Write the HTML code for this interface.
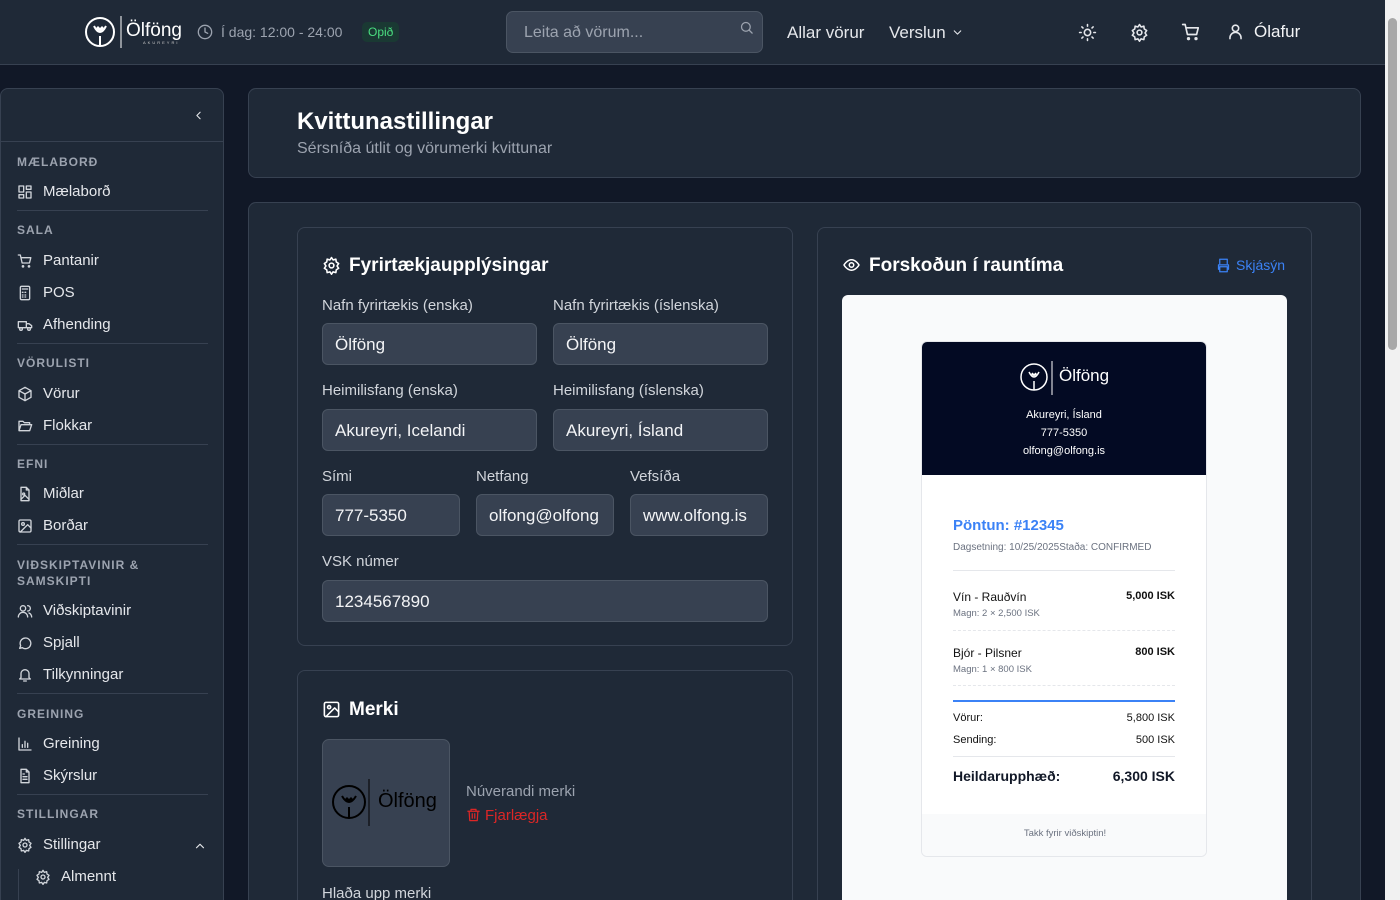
<!DOCTYPE html>
<html style="width:1400px;height:900px;overflow:hidden"><head><meta charset="utf-8"><style>
*{box-sizing:border-box;margin:0;padding:0}
html,body{overflow:hidden}
body{width:1400px;height:900px;overflow:hidden;background:#111827;font-family:"Liberation Sans",sans-serif;color:#f3f4f6;position:relative}
.abs{position:absolute}
svg{display:block}
.ic{fill:none;stroke:currentColor;stroke-width:2;stroke-linecap:round;stroke-linejoin:round}
.hdr{left:0;top:0;width:1385px;height:65px;background:#1f2937;border-bottom:1px solid #374151}
.side{left:0;top:88px;width:224px;height:830px;background:#1f2937;border:1px solid #374151;border-radius:8px}
.sec{position:absolute;left:16px;font-size:12px;font-weight:bold;letter-spacing:1px;color:#9ca3af}
.it{position:absolute;left:16px;font-size:15px;color:#e5e7eb;display:flex;align-items:center;gap:10px}
.it svg{width:16px;height:16px;color:#d1d5db}
.hr{position:absolute;left:16px;width:191px;height:1px;background:#374151}
.card{background:#1f2937;border:1px solid #374151;border-radius:8px}
.lbl{position:absolute;font-size:15px;color:#d1d5db}
.inp{position:absolute;height:42px;background:#374151;border:1px solid #4b5563;border-radius:6px;font-size:17px;color:#f3f4f6;padding:11px 12px;white-space:nowrap;overflow:hidden}
.rc{font-size:11px;color:#111}
</style></head><body>
<div class="abs hdr"></div>
<svg class="abs" style="left:84px;top:14px" width="100" height="36" viewBox="0 0 100 36"><circle cx="16" cy="18" r="14" fill="none" stroke="#fff" stroke-width="2"/><path d="M10 12q6 12 12 0M16 22v10" fill="none" stroke="#fff" stroke-width="2"/><path d="M12 14q4 6 8 0l-2-2-2 2-2-2z" fill="#fff"/><line x1="37" y1="2" x2="37" y2="34" stroke="#fff" stroke-width="1"/></svg>
<div class="abs" style="left:126px;top:20px;font-size:19px;color:#fff">Ölföng</div>
<div class="abs" style="left:143px;top:40px;font-size:4px;letter-spacing:2px;color:#ccc">AKUREYRI</div>
<svg class="abs ic" style="left:197px;top:24px;color:#9ca3af" width="16" height="16" viewBox="0 0 24 24"><circle cx="12" cy="12" r="10"/><path d="M12 6v6l4 2"/></svg>
<div class="abs" style="left:221px;top:24px;font-size:14px;color:#9ca3af">Í dag: 12:00 - 24:00</div>
<div class="abs" style="left:362px;top:22px;padding:3px 6px;font-size:12px;color:#4ade80;background:#14532d66;border-radius:5px">Opið</div>
<div class="abs" style="left:506px;top:11px;width:257px;height:42px;background:#374151;border:1px solid #4b5563;border-radius:7px;font-size:16px;color:#9ca3af;padding:12px 17px">Leita að vörum...</div>
<svg class="abs ic" style="left:739px;top:20px;color:#9ca3af" width="15" height="15" viewBox="0 0 24 24"><circle cx="11" cy="11" r="7"/><path d="M21 21l-5-5"/></svg>
<div class="abs" style="left:787px;top:23px;font-size:17px;color:#e5e7eb">Allar vörur</div>
<div class="abs" style="left:889px;top:23px;font-size:17px;color:#e5e7eb">Verslun</div>
<svg class="abs ic" style="left:951px;top:26px;color:#e5e7eb" width="13" height="13" viewBox="0 0 24 24"><path d="M6 9l6 6 6-6"/></svg>
<svg class="abs ic" style="left:1078px;top:23px;color:#e5e7eb" width="19" height="19" viewBox="0 0 24 24"><circle cx="12" cy="12" r="4"/><path d="M12 2v2M12 20v2M4.9 4.9l1.4 1.4M17.7 17.7l1.4 1.4M2 12h2M20 12h2M4.9 19.1l1.4-1.4M17.7 6.3l1.4-1.4"/></svg>
<svg class="abs ic" style="left:1130px;top:23px;color:#e5e7eb" width="19" height="19" viewBox="0 0 24 24"><circle cx="12" cy="12" r="3"/><path d="M12 2l2 3 3.5-1 .5 3.5 3 2-2 3 2 3-3 2-.5 3.5-3.5-1-2 3-2-3-3.5 1-.5-3.5-3-2 2-3-2-3 3-2 .5-3.5 3.5 1z"/></svg>
<svg class="abs ic" style="left:1181px;top:22px;color:#e5e7eb" width="20" height="20" viewBox="0 0 24 24"><path d="M2 3h3l2.7 12h11l2-8H6"/><circle cx="9" cy="20" r="1"/><circle cx="18" cy="20" r="1"/></svg>
<svg class="abs ic" style="left:1226px;top:22px;color:#e5e7eb" width="19" height="19" viewBox="0 0 24 24"><circle cx="12" cy="8" r="4"/><path d="M5 21v-1a7 7 0 0 1 14 0v1"/></svg>
<div class="abs" style="left:1254px;top:22px;font-size:17px;color:#f3f4f6">Ólafur</div>
<div class="abs" style="left:1385px;top:0;width:15px;height:900px;background:#f1f1f1"></div>
<div class="abs" style="left:1388px;top:18px;width:9px;height:332px;background:#a8a8a8;border-radius:5px"></div>

<div class="abs side">
<svg class="abs ic" style="left:191px;top:20px;color:#e5e7eb" width="13" height="13" viewBox="0 0 24 24"><path d="M15 6l-6 6 6 6"/></svg>
<div class="abs" style="left:0;top:52px;width:222px;height:1px;background:#374151"></div>
<div class="sec" style="top:66px">MÆLABORÐ</div>
<div class="it" style="top:94px"><svg class="ic" viewBox="0 0 24 24"><rect x="3" y="3" width="7" height="9"/><rect x="14" y="3" width="7" height="5"/><rect x="14" y="12" width="7" height="9"/><rect x="3" y="16" width="7" height="5"/></svg>Mælaborð</div>
<div class="hr" style="top:121px"></div>
<div class="sec" style="top:134px">SALA</div>
<div class="it" style="top:163px"><svg class="ic" viewBox="0 0 24 24"><path d="M2 3h3l2.7 12h11l2-8H6"/><circle cx="9" cy="20" r="1"/><circle cx="18" cy="20" r="1"/></svg>Pantanir</div>
<div class="it" style="top:195px"><svg class="ic" viewBox="0 0 24 24"><rect x="5" y="2" width="14" height="20" rx="2"/><path d="M8 6h8M8 11h1M12 11h1M8 15h1M12 15h1M8 18h1M12 18h1"/></svg>POS</div>
<div class="it" style="top:227px"><svg class="ic" viewBox="0 0 24 24"><path d="M2 7h12v9H2zM14 10h4l4 3v3h-8"/><circle cx="6" cy="18" r="2"/><circle cx="18" cy="18" r="2"/></svg>Afhending</div>
<div class="hr" style="top:254px"></div>
<div class="sec" style="top:267px">VÖRULISTI</div>
<div class="it" style="top:296px"><svg class="ic" viewBox="0 0 24 24"><path d="M12 2l9 5v10l-9 5-9-5V7zM3 7l9 5 9-5M12 12v10"/></svg>Vörur</div>
<div class="it" style="top:328px"><svg class="ic" viewBox="0 0 24 24"><path d="M3 19V5h6l2 2h8v3M3 19l3-9h16l-3 9z"/></svg>Flokkar</div>
<div class="hr" style="top:355px"></div>
<div class="sec" style="top:368px">EFNI</div>
<div class="it" style="top:396px"><svg class="ic" viewBox="0 0 24 24"><path d="M14 2H6v20h12V6zM14 2v4h4"/><circle cx="10" cy="12" r="1.5"/><path d="M6 20l6-6 6 6"/></svg>Miðlar</div>
<div class="it" style="top:428px"><svg class="ic" viewBox="0 0 24 24"><rect x="3" y="3" width="18" height="18" rx="2"/><circle cx="9" cy="9" r="2"/><path d="M21 15l-5-5L5 21"/></svg>Borðar</div>
<div class="hr" style="top:455px"></div>
<div class="sec" style="top:468px;line-height:16px">VIÐSKIPTAVINIR &amp;<br>SAMSKIPTI</div>
<div class="it" style="top:513px"><svg class="ic" viewBox="0 0 24 24"><circle cx="9" cy="8" r="4"/><path d="M2 21a7 7 0 0 1 14 0M16 4a4 4 0 0 1 0 8M22 21a7 7 0 0 0-4-6"/></svg>Viðskiptavinir</div>
<div class="it" style="top:545px"><svg class="ic" viewBox="0 0 24 24"><path d="M4 20l1.5-4A8 8 0 1 1 8 19z"/></svg>Spjall</div>
<div class="it" style="top:577px"><svg class="ic" viewBox="0 0 24 24"><path d="M6 16V10a6 6 0 0 1 12 0v6l2 2H4zM10 21h4"/></svg>Tilkynningar</div>
<div class="hr" style="top:604px"></div>
<div class="sec" style="top:618px">GREINING</div>
<div class="it" style="top:646px"><svg class="ic" viewBox="0 0 24 24"><path d="M3 3v18h18M8 17v-4M12 17V8M16 17v-6"/></svg>Greining</div>
<div class="it" style="top:678px"><svg class="ic" viewBox="0 0 24 24"><path d="M14 2H6v20h12V6zM14 2v4h4M9 13h6M9 17h6M9 9h2"/></svg>Skýrslur</div>
<div class="hr" style="top:705px"></div>
<div class="sec" style="top:718px">STILLINGAR</div>
<div class="it" style="top:747px"><svg class="ic" viewBox="0 0 24 24"><circle cx="12" cy="12" r="3"/><path d="M12 2l2 3 3.5-1 .5 3.5 3 2-2 3 2 3-3 2-.5 3.5-3.5-1-2 3-2-3-3.5 1-.5-3.5-3-2 2-3-2-3 3-2 .5-3.5 3.5 1z"/></svg>Stillingar</div>
<svg class="abs ic" style="left:192px;top:750px;color:#e5e7eb" width="14" height="14" viewBox="0 0 24 24"><path d="M6 15l6-6 6 6"/></svg>
<div class="abs" style="left:17px;top:780px;width:1px;height:50px;background:#374151"></div>
<div class="it" style="top:779px;left:34px"><svg class="ic" viewBox="0 0 24 24"><circle cx="12" cy="12" r="3"/><path d="M12 2l2 3 3.5-1 .5 3.5 3 2-2 3 2 3-3 2-.5 3.5-3.5-1-2 3-2-3-3.5 1-.5-3.5-3-2 2-3-2-3 3-2 .5-3.5 3.5 1z"/></svg>Almennt</div>
</div>

<div class="abs card" style="left:248px;top:88px;width:1113px;height:90px"></div>
<div class="abs" style="left:297px;top:108px;font-size:24px;font-weight:bold;color:#fff">Kvittunastillingar</div>
<div class="abs" style="left:297px;top:140px;font-size:16px;color:#9ca3af">Sérsníða útlit og vörumerki kvittunar</div>

<div class="abs card" style="left:248px;top:202px;width:1113px;height:720px"></div>
<div class="abs card" style="left:297px;top:227px;width:496px;height:419px"></div>
<svg class="abs ic" style="left:322px;top:256px;color:#fff" width="19" height="19" viewBox="0 0 24 24"><circle cx="12" cy="12" r="3"/><path d="M12 2l2 3 3.5-1 .5 3.5 3 2-2 3 2 3-3 2-.5 3.5-3.5-1-2 3-2-3-3.5 1-.5-3.5-3-2 2-3-2-3 3-2 .5-3.5 3.5 1z"/></svg>
<div class="abs" style="left:349px;top:255px;font-size:19px;font-weight:bold;color:#fff">Fyrirtækjaupplýsingar</div>
<div class="lbl" style="left:322px;top:297px">Nafn fyrirtækis (enska)</div>
<div class="lbl" style="left:553px;top:297px">Nafn fyrirtækis (íslenska)</div>
<div class="inp" style="left:322px;top:323px;width:215px">Ölföng</div>
<div class="inp" style="left:553px;top:323px;width:215px">Ölföng</div>
<div class="lbl" style="left:322px;top:382px">Heimilisfang (enska)</div>
<div class="lbl" style="left:553px;top:382px">Heimilisfang (íslenska)</div>
<div class="inp" style="left:322px;top:409px;width:215px">Akureyri, Icelandi</div>
<div class="inp" style="left:553px;top:409px;width:215px">Akureyri, Ísland</div>
<div class="lbl" style="left:322px;top:468px">Sími</div>
<div class="lbl" style="left:476px;top:468px">Netfang</div>
<div class="lbl" style="left:630px;top:468px">Vefsíða</div>
<div class="inp" style="left:322px;top:494px;width:138px">777-5350</div>
<div class="inp" style="left:476px;top:494px;width:138px">olfong@olfong</div>
<div class="inp" style="left:630px;top:494px;width:138px">www.olfong.is</div>
<div class="lbl" style="left:322px;top:553px">VSK númer</div>
<div class="inp" style="left:322px;top:580px;width:446px">1234567890</div>

<div class="abs card" style="left:297px;top:670px;width:496px;height:260px"></div>
<svg class="abs ic" style="left:322px;top:700px;color:#fff" width="19" height="19" viewBox="0 0 24 24"><rect x="3" y="3" width="18" height="18" rx="2"/><circle cx="9" cy="9" r="2"/><path d="M21 15l-5-5L5 21"/></svg>
<div class="abs" style="left:349px;top:699px;font-size:19px;font-weight:bold;color:#fff">Merki</div>
<div class="abs" style="left:322px;top:739px;width:128px;height:128px;background:#374151;border:1px solid #4b5563;border-radius:7px"></div>
<svg class="abs" style="left:330px;top:779px" width="40" height="48" viewBox="0 0 40 48"><circle cx="19" cy="23" r="16" fill="none" stroke="#000" stroke-width="2"/><path d="M12 17q7 12 14 0M19 28v11" fill="none" stroke="#000" stroke-width="2"/><path d="M15 20q4 5 8 0l-2-2-2 2-2-2z" fill="#000"/><line x1="39" y1="0" x2="39" y2="47" stroke="#000"/></svg>
<div class="abs" style="left:378px;top:790px;font-size:20px;color:#000">Ölföng</div>
<div class="abs" style="left:466px;top:783px;font-size:15px;color:#9ca3af">Núverandi merki</div>
<svg class="abs ic" style="left:466px;top:807px;color:#dc2626" width="15" height="16" viewBox="0 0 24 24"><path d="M3 6h18M8 6V3h8v3M5 6l1 15h12l1-15M10 10v7M14 10v7"/></svg>
<div class="abs" style="left:485px;top:807px;font-size:15px;color:#dc2626">Fjarlægja</div>
<div class="abs" style="left:322px;top:885px;font-size:15px;color:#d1d5db">Hlaða upp merki</div>

<div class="abs card" style="left:817px;top:227px;width:495px;height:700px"></div>
<svg class="abs ic" style="left:842px;top:256px;color:#fff" width="19" height="18" viewBox="0 0 24 24"><path d="M2 12s4-7 10-7 10 7 10 7-4 7-10 7S2 12 2 12z"/><circle cx="12" cy="12" r="3"/></svg>
<div class="abs" style="left:869px;top:255px;font-size:19px;font-weight:bold;color:#fff">Forskoðun í rauntíma</div>
<svg class="abs ic" style="left:1216px;top:258px;color:#3b82f6" width="15" height="15" viewBox="0 0 24 24"><path d="M6 9V2h12v7M6 18H4v-7h16v7h-2M6 14h12v8H6z"/></svg>
<div class="abs" style="left:1236px;top:257px;font-size:14px;color:#3b82f6">Skjásýn</div>
<div class="abs" style="left:842px;top:295px;width:445px;height:640px;background:#f9fafb;border-radius:6px"></div>
<div class="abs" style="left:921px;top:341px;width:286px;height:516px;background:#fff;border:1px solid #e5e7eb;border-radius:6px;overflow:hidden">
 <div style="height:133px;background:#030a23;position:relative">
  <svg class="abs" style="left:98px;top:18px" width="40" height="36" viewBox="0 0 40 36"><circle cx="14" cy="17" r="13" fill="none" stroke="#fff" stroke-width="1.5"/><path d="M9 12q5 10 10 0M14 21v9" fill="none" stroke="#fff" stroke-width="1.5"/><path d="M11 14q3 4 6 0l-1.5-1.5-1.5 1.5-1.5-1.5z" fill="#fff"/><line x1="32" y1="1" x2="32" y2="35" stroke="#fff"/></svg>
  <div class="abs" style="left:137px;top:24px;font-size:17px;color:#fff">Ölföng</div>
  <div class="abs" style="left:0;width:284px;top:64px;text-align:center;font-size:11px;color:#fff;line-height:18px">Akureyri, Ísland<br>777-5350<br>olfong@olfong.is</div>
 </div>
 <div class="abs" style="left:31px;top:175px;font-size:15px;font-weight:bold;color:#3b82f6">Pöntun: #12345</div>
 <div class="abs" style="left:31px;top:200px;font-size:10px;color:#6b7280">Dagsetning: 10/25/2025Staða: CONFIRMED</div>
 <div class="abs" style="left:31px;top:228px;width:222px;height:1px;background:#e5e7eb"></div>
 <div class="abs rc" style="left:31px;top:248px;font-size:12px">Vín - Rauðvín</div>
 <div class="abs rc" style="right:31px;top:248px;font-size:11px;font-weight:bold">5,000 ISK</div>
 <div class="abs" style="left:31px;top:266px;font-size:9.5px;color:#6b7280">Magn: 2 × 2,500 ISK</div>
 <div class="abs" style="left:31px;top:288px;width:222px;border-top:1px dashed #e5e7eb"></div>
 <div class="abs rc" style="left:31px;top:304px;font-size:12px">Bjór - Pilsner</div>
 <div class="abs rc" style="right:31px;top:304px;font-size:11px;font-weight:bold">800 ISK</div>
 <div class="abs" style="left:31px;top:322px;font-size:9.5px;color:#6b7280">Magn: 1 × 800 ISK</div>
 <div class="abs" style="left:31px;top:343px;width:222px;border-top:1px dashed #e5e7eb"></div>
 <div class="abs" style="left:31px;top:358px;width:222px;height:2px;background:#3b82f6"></div>
 <div class="abs rc" style="left:31px;top:370px">Vörur:</div>
 <div class="abs rc" style="right:31px;top:370px">5,800 ISK</div>
 <div class="abs rc" style="left:31px;top:392px">Sending:</div>
 <div class="abs rc" style="right:31px;top:392px">500 ISK</div>
 <div class="abs" style="left:31px;top:414px;width:222px;height:1px;background:#e5e7eb"></div>
 <div class="abs" style="left:31px;top:426px;font-size:14px;font-weight:bold;color:#111827">Heildarupphæð:</div>
 <div class="abs" style="right:31px;top:426px;font-size:14px;font-weight:bold;color:#111827">6,300 ISK</div>
 <div class="abs" style="left:0;top:472px;width:286px;height:44px;background:#f9fafb;text-align:center;font-size:9.5px;color:#6b7280;padding-top:14px">Takk fyrir viðskiptin!</div>
</div>
</body></html>
